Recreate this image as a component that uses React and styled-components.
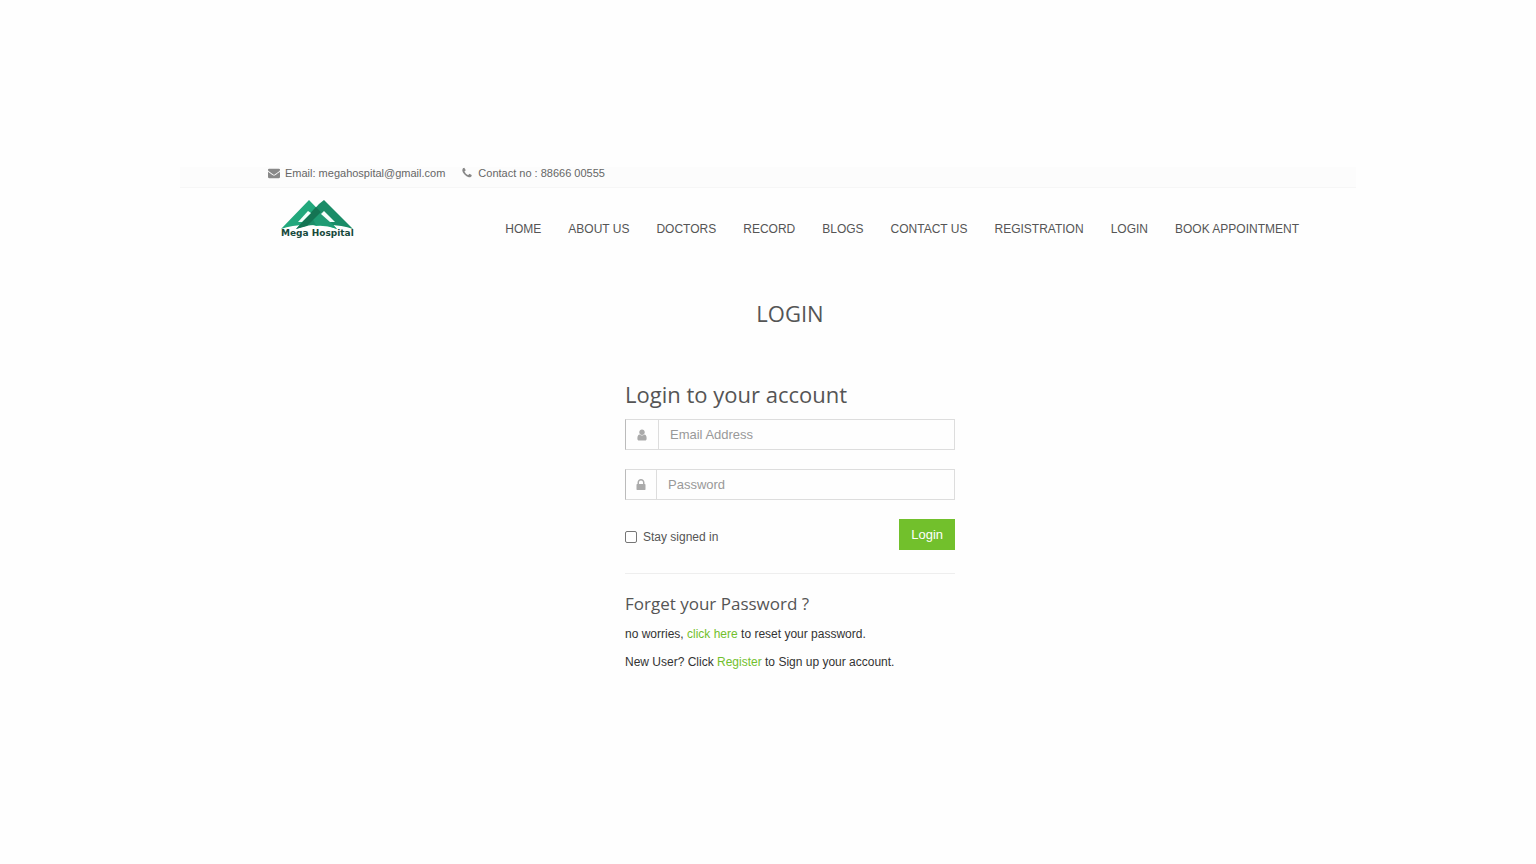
import styled, { createGlobalStyle } from "styled-components";

const GlobalStyle = createGlobalStyle`
  * {
    box-sizing: border-box;
  }

  body {
    margin: 0;
    background-color: #fefefe;
    color: #333;
    font-family: "Liberation Sans", Arial, sans-serif;
    font-size: 12px;
  }
`;

const Container = styled.div`
  max-width: 1176px;
  margin: 0 auto;
  padding-top: 167px;
`;

const TopBar = styled.div`
  display: flex;
  gap: 16px;
  height: 21px;
  padding: 0 44px 8px 88px;
  background-color: #fcfcfc;
  border-bottom: 1px solid #f6f6f6;
`;

const TopItem = styled.span`
  display: flex;
  align-items: center;
  gap: 5px;
  font-size: 11px;
  line-height: 12px;
  color: #666;
`;

const Icon = styled.svg`
  width: ${(props) => props.$size}px;
  height: ${(props) => props.$size}px;
  fill: ${(props) => props.$color || "#999"};
  flex-shrink: 0;
`;

const Header = styled.header`
  display: flex;
  justify-content: space-between;
  align-items: flex-start;
  padding: 10px 57px 0 100px;

  @media screen and (max-width: 768px) {
    flex-direction: column;
    padding: 10px 20px;
  }
`;

const LogoLink = styled.a`
  display: block;
  line-height: 0;
`;

const Nav = styled.nav`
  display: flex;
  flex-wrap: wrap;
  gap: 27px;
  padding-top: 24px;
`;

const NavLink = styled.a`
  font-size: 12px;
  line-height: 14px;
  color: #555;
  text-decoration: none;
  white-space: nowrap;
`;

const Main = styled.main`
  display: flex;
  flex-direction: column;
  align-items: center;
  padding: 57px 44px 40px 88px;

  @media screen and (max-width: 768px) {
    padding: 40px 20px;
  }
`;

const Title = styled.h1`
  margin: 0 0 49px;
  font-family: "Open Sans", sans-serif;
  font-size: 22px;
  font-weight: 400;
  line-height: 32px;
  color: #555;
`;

const Panel = styled.section`
  width: 100%;
  max-width: 330px;
`;

const Subtitle = styled.h2`
  margin: 0 0 9px;
  font-family: "Open Sans", sans-serif;
  font-size: 22px;
  font-weight: 400;
  line-height: 32px;
  color: #555;
`;

const Form = styled.form`
  padding-bottom: 23px;
  border-bottom: 1px solid #eee;
`;

const Field = styled.div`
  display: flex;
  height: 31px;
  margin-bottom: 19px;
  border: 1px solid #ddd;
  border-left-color: #bbb;
`;

const FieldLabel = styled.label`
  display: flex;
  align-items: center;
  padding: 0 10px;
  border-right: 1px solid #ddd;
`;

const Input = styled.input`
  flex: 1;
  min-width: 0;
  padding: 0 11px;
  border: none;
  outline: none;
  background: transparent;
  color: #555;
  font-family: inherit;
  font-size: 13px;

  &::placeholder {
    color: #999;
    opacity: 1;
  }
`;

const Actions = styled.div`
  display: flex;
  justify-content: space-between;
  align-items: center;
`;

const Remember = styled.label`
  display: flex;
  align-items: center;
  gap: 6px;
  padding-top: 4px;
  font-size: 12px;
  color: #555;
`;

const Checkbox = styled.input`
  appearance: none;
  width: 12px;
  height: 12px;
  margin: 0;
  border: 1px solid #767676;
  border-radius: 2px;
  background-color: white;

  &:checked {
    background-color: #72c02c;
  }
`;

const Button = styled.button`
  height: 31px;
  padding: 0 12px;
  border: none;
  background-color: #72c02c;
  color: white;
  font-family: inherit;
  font-size: 13px;
  cursor: pointer;
`;

const HelpTitle = styled.h3`
  margin: 18px 0 10px;
  font-family: "Open Sans", sans-serif;
  font-size: 17px;
  font-weight: 400;
  line-height: 24px;
  color: #555;
`;

const HelpText = styled.p`
  margin: 0 0 12px;
  font-size: 12px;
  line-height: 16px;
  color: #333;
`;

const HelpLink = styled.a`
  color: #72c02c;
  text-decoration: none;
`;

const icons = {
  envelope: {
    box: "0 0 1792 1792",
    path: "M1792 710v794q0 66-47 113t-113 47h-1472q-66 0-113-47t-47-113v-794q44 49 101 87 362 246 497 345 57 42 92.500 65.500t94.500 48 110 24.500h2q51 0 110-24.500t94.500-48 92.500-65.500q170-123 498-345 57-39 100-87zm0-294q0 79-49 151t-122 123q-376 261-468 325-10 7-42.500 31t-54 38.500-52 32.500-57.500 27-50 9h-2q-23 0-50-9t-57.500-27-52-32.500-54-38.500-42.500-31q-91-64-262-182.500t-205-142.500q-62-42-117-115.500t-55-136.500q0-78 41.500-130t118.500-52h1472q65 0 112.500 47t47.500 113z",
  },
  phone: {
    box: "0 0 1792 1792",
    path: "M1600 1240q0 27-10 70.500t-21 68.500q-21 50-122 106-94 51-186 51-27 0-53-3.500t-57.500-12.500-47-14.500-55.500-20.500-49-18q-98-35-175-83-127-79-264-216t-216-264q-48-77-83-175-3-9-18-49t-20.500-55.500-14.500-47-12.500-57.500-3.500-53q0-92 51-186 56-101 106-122 25-11 68.500-21t70.500-10q14 0 21 3 18 6 53 76 11 19 30 54t35 63.500 31 53.500q3 4 17.500 25t21.500 35.500 7 28.500q0 20-28.500 50t-62 55-62 53-28.500 46q0 9 5 22.500t8.500 20.500 14 24 11.500 19q76 137 174 235t235 174q2 1 19 11.500t24 14 20.500 8.500 22.500 5q18 0 46-28.500t53-62 55-62 50-28.500q14 0 28.500 7t35.500 21.500 25 17.500q25 15 53.500 31t63.500 35 54 30q70 35 76 53 3 7 3 21z",
  },
  user: {
    box: "64 64 1664 1664",
    path: "M1536 1399q0 109-62.500 187t-150.500 78h-854q-88 0-150.500-78t-62.500-187q0-85 8.500-160.500t31.500-152 58.500-131 94-89 134.500-34.500q131 128 313 128t313-128q76 0 134.500 34.500t94 89 58.500 131 31.500 152 8.500 160.500zm-256-887q0 159-112.500 271.500t-271.500 112.500-271.500-112.500-112.500-271.500 112.500-271.500 271.500-112.500 271.500 112.500 112.500 271.500z",
  },
  lock: {
    box: "256 256 1280 1280",
    path: "M640 768h512v-192q0-106-75-181t-181-75-181 75-75 181v192zm832 96v576q0 40-28 68t-68 28h-960q-40 0-68-28t-28-68v-576q0-40 28-68t68-28h32v-192q0-184 132-316t316-132 316 132 132 316v192h32q40 0 68 28t28 68z",
  },
};

const links = [
  "HOME",
  "ABOUT US",
  "DOCTORS",
  "RECORD",
  "BLOGS",
  "CONTACT US",
  "REGISTRATION",
  "LOGIN",
  "BOOK APPOINTMENT",
];

const Glyph = ({ name, size, color }) => (
  <Icon
    viewBox={icons[name].box}
    $size={size}
    $color={color}
    overflow="visible"
    aria-hidden="true"
  >
    <path d={icons[name].path} />
  </Icon>
);

const Logo = () => (
  <svg width="74" height="42" viewBox="0 0 74 42" role="img">
    <path d="M29 2 57 31Q46 27 36 28Q32 26 26 27Q12 27 1 31Z" fill="#22a87c" />
    <path d="M44 2 73 31Q62 27 48 27Q42 26 35 27Q26 27 16 31L39 6Z" fill="#1a8c67" />
    <path d="M36 9 45 18 57 31Q48 27 36 27L30 16Z" fill="#1f9b73" />
    <path d="M36 9 41 14 27 28 16 31Z" fill="#147453" />
    <path d="M28 13 31 15 22 24 18 24Z" fill="#f4fffb" />
    <path d="M44 13 55 24 50 24 41 16Z" fill="#f4fffb" />
    <text
      x="1"
      y="38"
      fontFamily="DejaVu Sans, sans-serif"
      fontSize="9"
      fontWeight="700"
      fill="#17493c"
    >
      Mega Hospital
    </text>
  </svg>
);

const App = () => {
  return (
    <>
      <GlobalStyle />
      <Container>
        <TopBar>
          <TopItem>
            <Glyph name="envelope" size={12} color="#888" />
            Email: megahospital@gmail.com
          </TopItem>
          <TopItem>
            <Glyph name="phone" size={12} color="#888" />
            Contact no : 88666 00555
          </TopItem>
        </TopBar>
        <Header>
          <LogoLink href="#home" aria-label="Mega Hospital">
            <Logo />
          </LogoLink>
          <Nav>
            {links.map((link) => (
              <NavLink key={link} href="#">
                {link}
              </NavLink>
            ))}
          </Nav>
        </Header>
        <Main>
          <Title>LOGIN</Title>
          <Panel>
            <Subtitle>Login to your account</Subtitle>
            <Form onSubmit={(e) => e.preventDefault()}>
              <Field>
                <FieldLabel htmlFor="email" aria-label="Email Address">
                  <Glyph name="user" size={12} color="#aaa" />
                </FieldLabel>
                <Input id="email" type="email" placeholder="Email Address" />
              </Field>
              <Field>
                <FieldLabel htmlFor="password" aria-label="Password">
                  <Glyph name="lock" size={10} color="#aaa" />
                </FieldLabel>
                <Input id="password" type="password" placeholder="Password" />
              </Field>
              <Actions>
                <Remember>
                  <Checkbox type="checkbox" />
                  Stay signed in
                </Remember>
                <Button type="submit">Login</Button>
              </Actions>
            </Form>
            <HelpTitle>Forget your Password ?</HelpTitle>
            <HelpText>
              no worries, <HelpLink href="#reset">click here</HelpLink> to reset
              your password.
            </HelpText>
            <HelpText>
              New User? Click <HelpLink href="#register">Register</HelpLink> to
              Sign up your account.
            </HelpText>
          </Panel>
        </Main>
      </Container>
    </>
  );
};

export default App;
